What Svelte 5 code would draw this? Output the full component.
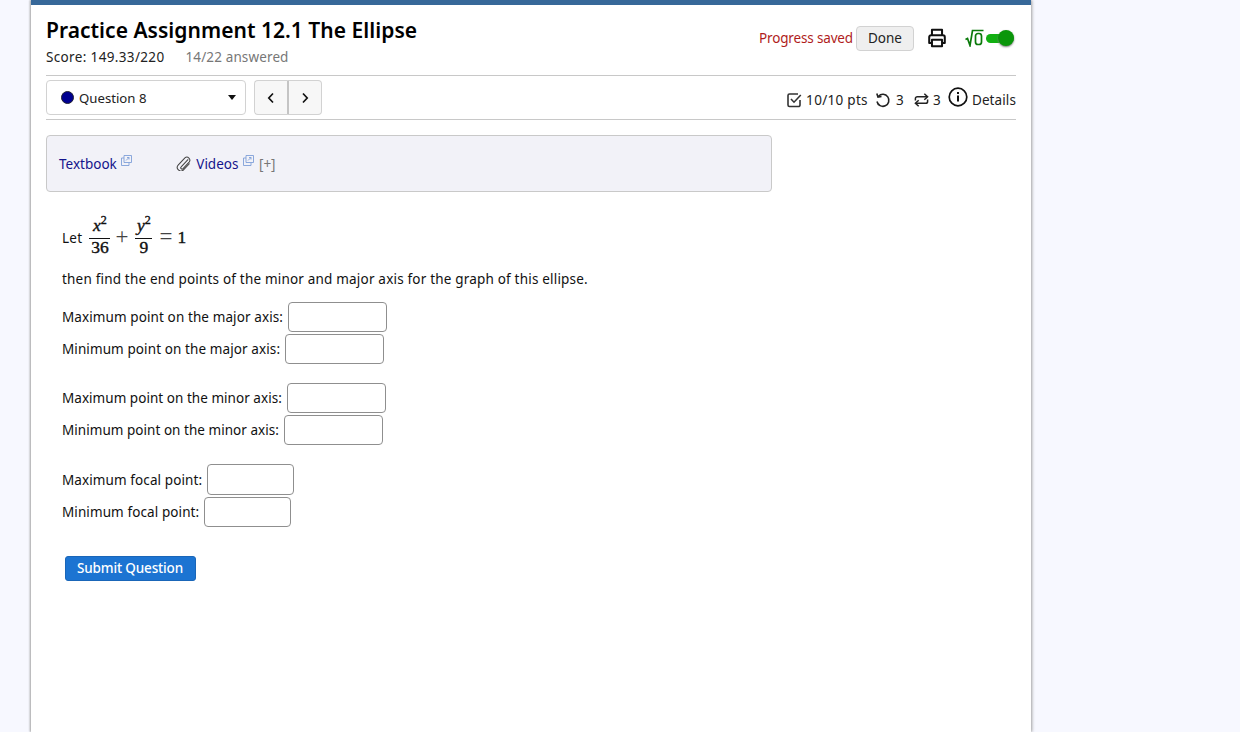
<script lang="ts">
  const groups = [
    [
      { label: 'Maximum point on the major axis:', h: 30, w: 99, tight: false },
      { label: 'Minimum point on the major axis:', h: 30, w: 99, tight: false }
    ],
    [
      { label: 'Maximum point on the minor axis:', h: 30, w: 99, tight: true },
      { label: 'Minimum point on the minor axis:', h: 30, w: 99, tight: true }
    ],
    [
      { label: 'Maximum focal point:', h: 31, w: 87, tight: false },
      { label: 'Minimum focal point:', h: 30, w: 87, tight: false }
    ]
  ];
</script>

<div class="page">
  <main class="sheet">
    <header class="head">
      <div>
        <h1>Practice Assignment 12.1 The Ellipse</h1>
        <div class="score"><span class="points">Score: 149.33/220</span><span class="answered">14/22 answered</span></div>
      </div>
      <div class="tools">
        <span class="saved">Progress saved</span>
        <button class="done" type="button">Done</button>
        <svg class="print" viewBox="0 0 24 24" width="22" height="22" fill="none" stroke="#111" stroke-width="2.2" stroke-linejoin="round">
          <path d="M6.500 9V3h11v6" />
          <path d="M6.500 17.500H3.500V11a2 2 0 0 1 2-2h13a2 2 0 0 1 2 2v6.500h-3" />
          <rect x="6.500" y="14" width="11" height="7" />
        </svg>
        <span class="sqrt">
          <svg viewBox="0 0 19 18" width="19" height="18" fill="none" stroke="#0a7a0a" stroke-width="1.700">
            <path d="M0.500 10.500 2.500 9.500 5 16.500 7.500 1.500H18.500" />
            <rect x="10.500" y="4.500" width="6" height="11" rx="2.500" />
          </svg>
        </span>
        <span class="toggle"><span class="knob"></span></span>
      </div>
    </header>

    <div class="navbar">
      <div class="left">
        <div class="select">
          <span class="dot"></span>
          <span class="qlabel">Question 8</span>
          <span class="caret"></span>
        </div>
        <div class="pager">
          <button type="button" aria-label="Previous">
            <svg viewBox="0 0 10 12" width="10" height="12" fill="none" stroke="#111" stroke-width="1.700"><path d="M7 1.500 2.800 6 7 10.500" /></svg>
          </button>
          <button type="button" aria-label="Next">
            <svg viewBox="0 0 10 12" width="10" height="12" fill="none" stroke="#111" stroke-width="1.700"><path d="M3 1.500 7.200 6 3 10.500" /></svg>
          </button>
        </div>
      </div>
      <div class="stats">
        <span class="stat pts">
          <svg viewBox="0 0 16 16" width="16" height="16" fill="none" stroke="#333" stroke-width="1.600">
            <path d="M14 8v5a1.500 1.500 0 0 1-1.500 1.500h-9A1.500 1.500 0 0 1 2 13V3.500A1.500 1.500 0 0 1 3.500 2H12" />
            <path d="M5 7 8 10.200 14.800 3" />
          </svg>
          10/10 pts
        </span>
        <span class="stat tries">
          <svg viewBox="0 0 16 16" width="16" height="16" fill="none" stroke="#222" stroke-width="1.600">
            <path d="M3.500 4.200A6 6 0 1 1 2 9.500" />
            <path d="M1.800 1.500 3 5 6.500 4.500" />
          </svg>
          3
        </span>
        <span class="stat regen">
          <svg viewBox="0 0 16 16" width="15" height="16" fill="none" stroke="#222" stroke-width="1.600">
            <path d="M1.500 8.500V6.500a2 2 0 0 1 2-2H14" />
            <path d="M11 1.300 14.500 4.500 11 7.700" />
            <path d="M14.500 7.500v2a2 2 0 0 1-2 2H2" />
            <path d="M5 8.300 1.500 11.500 5 14.700" />
          </svg>
          3
        </span>
        <span class="stat details">
          <svg viewBox="0 0 20 20" width="20" height="20" fill="none" stroke="#111" stroke-width="1.700">
            <circle cx="10" cy="10" r="8.800" />
            <path d="M10 8.500V14.500" stroke-width="2" />
            <path d="M10 5v2" stroke-width="2" />
          </svg>
          Details
        </span>
      </div>
    </div>

    <section class="help">
      <a href="#textbook" class="link">Textbook
        <svg class="ext" viewBox="0 0 11 11" width="11" height="11" fill="none" stroke="#7f9fd8" stroke-width="0.900"><path d="M3 3H0.500v7.500h7.500V8" /><path d="M3 0.500h7.500v7H3z" /><path d="M5 5.500 8 2.500M6 2.500h2v2" /></svg>
      </a>
      <span class="videos">
        <svg class="clip" viewBox="0 0 16 16" width="15" height="15" fill="none" stroke="#444" stroke-width="1.100">
          <path d="M13 3.500 5.500 11.500a1.400 1.400 0 0 0 2 2L14 6.500a3.200 3.200 0 0 0-4.500-4.500L2.500 9.500a3.800 3.800 0 0 0 5.500 5.300L14.500 8" />
        </svg>
        <a href="#videos" class="link">Videos
          <svg class="ext" viewBox="0 0 11 11" width="11" height="11" fill="none" stroke="#7f9fd8" stroke-width="0.900"><path d="M3 3H0.500v7.500h7.500V8" /><path d="M3 0.500h7.500v7H3z" /><path d="M5 5.500 8 2.500M6 2.500h2v2" /></svg>
        </a>
        <span class="plus">[+]</span>
      </span>
    </section>

    <section class="question">
      <div class="eq">
        <span class="let">Let</span>
        <span class="math">
          <span class="frac first"><span class="num"><i>x</i><sup>2</sup></span><span class="den">36</span></span>
          <span class="op">+</span>
          <span class="frac"><span class="num"><i>y</i><sup>2</sup></span><span class="den">9</span></span>
          <span class="op eq-sign">=</span>
          <span class="one">1</span>
        </span>
      </div>
      <p class="intro">then find the end points of the minor and major axis for the graph of this ellipse.</p>

      {#each groups as group}
        <div class="group">
          {#each group as row}
            <label class="row" class:tight={row.tight}>
              <span>{row.label}</span>
              <input type="text" style={`width:${row.w}px;height:${row.h}px`} />
            </label>
          {/each}
        </div>
      {/each}

      <button class="submit" type="button">Submit Question</button>
    </section>
  </main>
</div>

<style>
  :global(body) {
    background: #f7f8ff;
    font-family: "Noto Sans", "DejaVu Sans", sans-serif;
    color: #111;
  }

  .page {
    padding-left: 31px;
    width: 1000px;
  }

  .sheet {
    box-sizing: border-box;
    width: 1000px;
    height: 732px;
    background: #fff;
    border-top: 5px solid #376899;
    padding: 0 15px;
    box-shadow: -1px 0 2px #a8a8a8, 1px 0 3px #a0a0a0;
    overflow: hidden;
  }

  .head {
    display: flex;
    justify-content: space-between;
    height: 71px;
    border-bottom: 1px solid #c8c8c8;
    box-sizing: border-box;
  }

  h1 {
    margin: 11px 0 0;
    font-size: 21px;
    line-height: 28px;
    font-weight: 600;
    letter-spacing: 0.03px;
    color: #000;
  }

  .score {
    margin-top: 4px;
    font-size: 13.500px;
    line-height: 18px;
    color: #222;
  }

  .points {
    letter-spacing: 0.35px;
  }

  .answered {
    margin-left: 21px;
    letter-spacing: 0.13px;
    color: #777;
  }

  .tools {
    display: flex;
    align-items: center;
    height: 66px;
    padding-right: 2px;
  }

  .saved {
    font-size: 13.500px;
    letter-spacing: -0.15px;
    color: #b01c1c;
  }

  .done {
    box-sizing: border-box;
    width: 58px;
    height: 25px;
    margin-left: 3px;
    padding: 0;
    font: inherit;
    font-size: 13.500px;
    color: #222;
    background: #efefef;
    border: 1px solid #d2d2d2;
    border-radius: 4px;
  }

  .print {
    margin-left: 12px;
  }

  .sqrt {
    display: flex;
    margin-left: 17px;
  }

  .toggle {
    position: relative;
    display: block;
    width: 28px;
    height: 9px;
    margin-left: 2px;
    background: #12b012;
    border-radius: 5px;
  }

  .knob {
    position: absolute;
    right: 0;
    top: -4px;
    width: 16px;
    height: 16px;
    border-radius: 50%;
    background: #0a960a;
    box-shadow: 0 1px 2px #777;
  }

  .navbar {
    display: flex;
    justify-content: space-between;
    align-items: center;
    box-sizing: border-box;
    height: 44px;
    border-bottom: 1px solid #c8c8c8;
  }

  .left {
    display: flex;
    gap: 8px;
  }

  .select {
    display: flex;
    align-items: center;
    box-sizing: border-box;
    width: 200px;
    height: 35px;
    padding: 0 9px 0 14px;
    border: 1px solid #d2d2d2;
    border-radius: 4px;
    font-size: 13.200px;
    color: #222;
  }

  .dot {
    width: 13px;
    height: 13px;
    margin-right: 5px;
    border-radius: 50%;
    background: #000090;
    border: 1px solid #223;
    box-sizing: border-box;
  }

  .caret {
    margin-left: auto;
    border: 4px solid transparent;
    border-top: 5px solid #111;
    border-bottom: 0;
  }

  .pager {
    display: flex;
  }

  .pager button {
    display: flex;
    align-items: center;
    justify-content: center;
    box-sizing: border-box;
    height: 35px;
    padding: 0;
    background: #f7f7f7;
    border: 1px solid #d2d2d2;
  }

  .pager button:first-child {
    width: 35px;
    border-radius: 4px 0 0 4px;
    border-right-color: #c4c4c4;
    border-right-width: 2px;
  }

  .pager button:last-child {
    width: 33px;
    border-left: 0;
    border-radius: 0 4px 4px 0;
  }

  .stats {
    display: flex;
    align-items: flex-end;
    height: 28px;
    margin-top: -6px;
    font-size: 13.500px;
    line-height: 18px;
    color: #222;
  }

  .stat {
    display: flex;
    align-items: center;
    gap: 4px;
    letter-spacing: 0.3px;
  }

  .tries {
    margin-left: 7px;
    gap: 5px;
  }

  .regen {
    margin-left: 10px;
  }

  .details {
    margin-left: 7px;
    letter-spacing: 0.1px;
  }

  .details svg {
    margin-top: -6px;
  }

  .help {
    display: flex;
    align-items: center;
    box-sizing: border-box;
    width: 726px;
    height: 57px;
    margin-top: 15px;
    padding-left: 12px;
    background: #f2f2f8;
    border: 1px solid #c9c9c9;
    border-radius: 4px;
    font-size: 13.500px;
  }

  .link {
    color: #14148c;
    text-decoration: none;
  }

  .ext {
    margin-left: 1px;
    vertical-align: 3px;
  }

  .videos {
    display: flex;
    align-items: center;
    margin-left: 44px;
  }

  .clip {
    margin-right: 5px;
  }

  .plus {
    margin-left: 5px;
    color: #777;
  }

  .question {
    padding-left: 16px;
    font-size: 13.500px;
    color: #111;
  }

  .eq {
    display: flex;
    align-items: center;
    height: 48px;
    margin-top: 21px;
  }

  .let {
    margin-right: 7px;
    margin-top: 1px;
    letter-spacing: 0.3px;
  }

  .math {
    display: flex;
    align-items: center;
    font-family: "Liberation Serif", serif;
    font-size: 17.500px;
    -webkit-text-stroke: 0.4px #111;
  }

  .frac {
    display: flex;
    flex-direction: column;
    align-items: center;
    width: 17px;
  }

  .frac.first {
    width: 21px;
  }

  .num {
    border-bottom: 1px solid #111;
    width: 100%;
    text-align: center;
    line-height: 20px;
    height: 23px;
  }

  .num sup {
    font-size: 12px;
    line-height: 0;
  }

  .den {
    height: 21px;
    line-height: 17px;
  }

  .op {
    margin: 0 7px 0 5px;
    font-size: 23px;
    line-height: 24px;
    color: #444;
    -webkit-text-stroke: 0;
  }

  .eq-sign {
    margin: 0 5px 0 7px;
  }

  .intro {
    margin: 8px 0 13px;
    line-height: 20px;
    letter-spacing: 0.19px;
  }

  .group {
    display: flex;
    flex-direction: column;
    gap: 2px;
    margin-bottom: 19px;
  }

  .row {
    display: flex;
    align-items: center;
    gap: 5px;
    letter-spacing: 0.1px;
  }

  .row.tight {
    letter-spacing: 0.04px;
  }

  input {
    box-sizing: border-box;
    margin: 0;
    padding: 0;
    background: #fff;
    border: 1px solid #8f8f8f;
    border-radius: 4px;
  }

  .submit {
    display: block;
    box-sizing: border-box;
    width: 131px;
    height: 25px;
    margin: 29px 0 0 3px;
    padding: 0 1px 1px 0;
    font: inherit;
    font-weight: 500;
    font-size: 13.500px;
    letter-spacing: -0.15px;
    color: #fff;
    background: #1c74d2;
    border: 1px solid #1a66b8;
    border-radius: 3px;
  }
</style>
